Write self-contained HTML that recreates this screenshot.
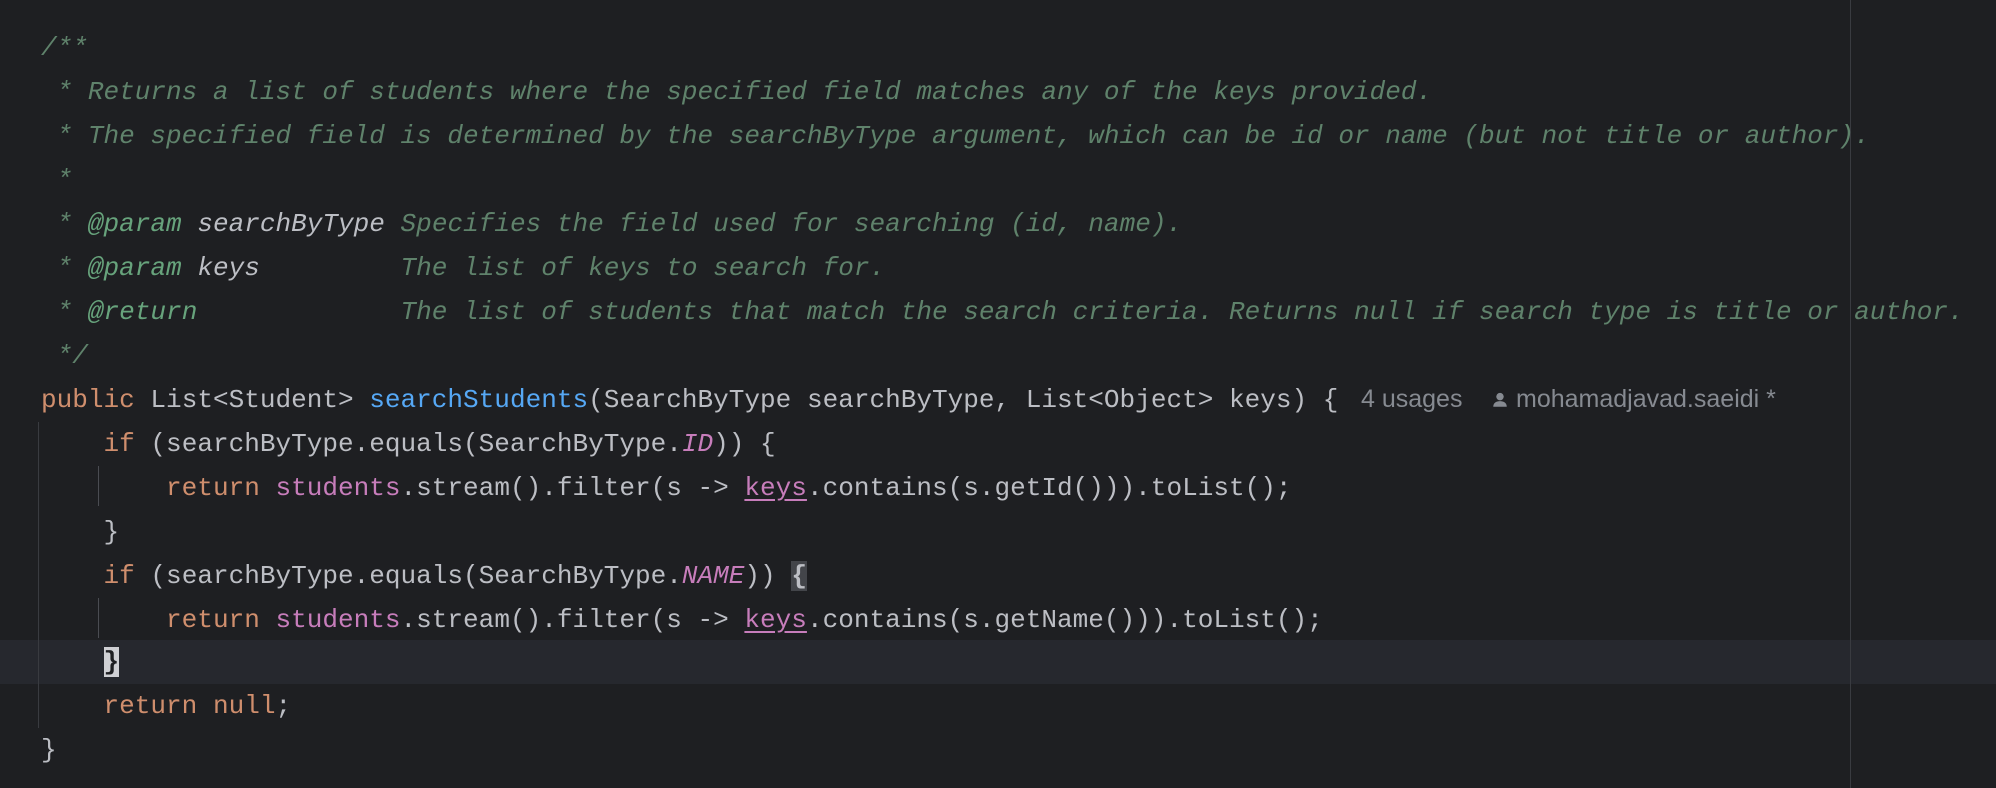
<!DOCTYPE html>
<html><head><meta charset="utf-8"><style>
html,body{margin:0;padding:0;background:#1e1f22;width:1996px;height:788px;overflow:hidden;position:relative}
.l{position:absolute;left:41px;height:44px;line-height:44px;white-space:pre;font-family:"Liberation Mono",monospace;font-size:26.05px;color:#bcbec4}
.c{color:#5f826b;font-style:italic}
.t{color:#67a37c;font-style:italic}
.p{color:#bcbec4;font-style:italic}
.k{color:#cf8e6d}
.m{color:#56a8f5}
.f{color:#c77dbb}
.si{color:#c77dbb;font-style:italic}
.u{text-decoration:underline;text-underline-offset:4px}
.hl{position:absolute;left:0;top:640px;width:1996px;height:44px;background:#26282e}
.g{position:absolute;width:1px;background:#393b40}
.br{background:#43454a;font-weight:bold}
.cur{background:#cfd0d4;color:#1e1f22;font-weight:bold}
.hint{position:absolute;top:377px;height:44px;line-height:44px;font-family:"Liberation Sans",sans-serif;font-size:25px;color:#868a91;white-space:pre}
</style></head><body>
<div class="hl"></div>
<div class="g" style="left:1850px;top:0;height:788px"></div>
<div class="g" style="left:38px;top:422px;height:306px"></div>
<div class="g" style="left:98px;top:466px;height:40px;background:#4a4c52"></div>
<div class="g" style="left:98px;top:598px;height:40px;background:#4a4c52"></div>

<div class="l c" style="top:26px">/**</div>
<div class="l c" style="top:70px"> * Returns a list of students where the specified field matches any of the keys provided.</div>
<div class="l c" style="top:114px"> * The specified field is determined by the searchByType argument, which can be id or name (but not title or author).</div>
<div class="l c" style="top:158px"> *</div>
<div class="l c" style="top:202px"> * <span class="t">@param</span> <span class="p">searchByType</span> Specifies the field used for searching (id, name).</div>
<div class="l c" style="top:246px"> * <span class="t">@param</span> <span class="p">keys</span>         The list of keys to search for.</div>
<div class="l c" style="top:290px"> * <span class="t">@return</span>             The list of students that match the search criteria. Returns null if search type is title or author.</div>
<div class="l c" style="top:334px"> */</div>
<div class="l" style="top:378px"><span class="k">public</span> List&lt;Student&gt; <span class="m">searchStudents</span>(SearchByType searchByType, List&lt;Object&gt; keys) {</div>
<div class="hint" style="left:1361px">4 usages</div>
<svg style="position:absolute;left:1492px;top:391px" width="16" height="18" viewBox="0 0 14 16"><circle cx="7" cy="5" r="3.3" fill="#868a91"/><path d="M1 14c0-3.5 2.7-5 6-5s6 1.5 6 5z" fill="#868a91"/></svg>
<div class="hint" style="left:1516px">mohamadjavad.saeidi *</div>
<div class="l" style="top:422px">    <span class="k">if</span> (searchByType.equals(SearchByType.<span class="si">ID</span>)) {</div>
<div class="l" style="top:466px">        <span class="k">return</span> <span class="f">students</span>.stream().filter(s -&gt; <span class="f u">keys</span>.contains(s.getId())).toList();</div>
<div class="l" style="top:510px">    }</div>
<div class="l" style="top:554px">    <span class="k">if</span> (searchByType.equals(SearchByType.<span class="si">NAME</span>)) <span class="br">{</span></div>
<div class="l" style="top:598px">        <span class="k">return</span> <span class="f">students</span>.stream().filter(s -&gt; <span class="f u">keys</span>.contains(s.getName())).toList();</div>
<div class="l" style="top:640px">    <span class="cur">}</span></div>
<div class="l" style="top:684px">    <span class="k">return null</span>;</div>
<div class="l" style="top:728px">}</div>
</body></html>
